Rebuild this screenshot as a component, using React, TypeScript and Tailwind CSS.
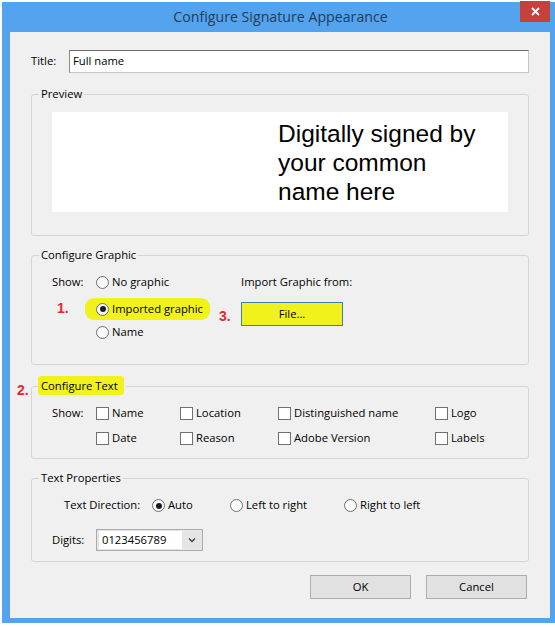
import * as React from "react";

const ui = "font-['Open_Sans','Noto_Sans',sans-serif] text-[11.25px] text-black";
const mark = "font-['Liberation_Sans',Arial,sans-serif] text-[14px] font-bold text-[#e8262d] leading-[16px]";
const hl = "bg-[#f1f11c]";

function Radio({ checked = false }: { checked?: boolean }) {
  return (
    <span className="flex h-[13px] w-[13px] shrink-0 items-center justify-center rounded-full border border-[#707070] bg-[#fbfbfb]">
      {checked && <span className="h-[6px] w-[6px] rounded-full bg-[#1b1b1b]" />}
    </span>
  );
}

function RadioItem({ label, checked, className = "" }: { label: string; checked?: boolean; className?: string }) {
  return (
    <div className={`flex items-center ${className}`}>
      <Radio checked={checked} />
      <span className="ml-[3px] whitespace-nowrap">{label}</span>
    </div>
  );
}

function Check({ label }: { label: string }) {
  return (
    <div className="flex items-center">
      <span className="h-[13px] w-[13px] shrink-0 border border-[#707070] bg-white" />
      <span className="ml-[3px] whitespace-nowrap">{label}</span>
    </div>
  );
}

// group box: the legend sits on the top border, so keep horizontal padding on the inner body
function Group({
  legend,
  children,
  className = "",
  bodyClass = "",
}: {
  legend: React.ReactNode;
  children: React.ReactNode;
  className?: string;
  bodyClass?: string;
}) {
  return (
    <fieldset className={`min-w-0 rounded-[3px] border border-[#d5d5d5] ${className}`}>
      <legend className="ml-[7px] px-[2px] leading-[16px]">{legend}</legend>
      <div className={bodyClass}>{children}</div>
    </fieldset>
  );
}

function WinButton({ children }: { children: React.ReactNode }) {
  return (
    <button className="flex h-[24px] w-[101px] items-center justify-center border border-[#adadad] bg-[#e1e1e1]">
      {children}
    </button>
  );
}

export default function App() {
  return (
    <div className={`h-[627px] w-[555px] overflow-hidden bg-white pl-[2px] pt-[2px] ${ui}`}>
      <div className="flex h-[621px] w-[557px] flex-col bg-[#53a3ef]">
        {/* title bar */}
        <div className="flex h-[30px] shrink-0 items-start">
          <div className="w-[39px]" />
          <div className="flex h-[30px] flex-1 items-center justify-center text-[14.2px] text-[#233b57]">
            Configure Signature Appearance
          </div>
          <div className="-mt-[1px] mr-[9px] flex h-[21px] w-[30px] items-center justify-center bg-[#c7413c]">
            <svg width="9" height="9" viewBox="0 0 9 9">
              <path d="M1 1L8 8M8 1L1 8" stroke="white" strokeWidth="1.8" />
            </svg>
          </div>
        </div>

        {/* client */}
        <div className="ml-[8px] flex h-[586px] w-[540px] flex-col bg-[#f0f0f0] pl-[21px] pr-[21px]">
          {/* title */}
          <div className="mt-[18px] flex h-[23px] items-center">
            <span className="w-[38px]">Title:</span>
            <div className="flex h-full flex-1 items-center border border-[#c5c5c5] border-l-[#8a8a8a] border-t-[#6f6f6f] bg-white pl-[3px]">
              Full name
            </div>
          </div>

          {/* preview */}
          <Group legend="Preview" className="mt-[13px] pb-[23px] pt-[10px]" bodyClass="px-[20px]">
            <div className="h-[100px] bg-white pl-[226px] pt-[7px] font-['Liberation_Sans',Arial,sans-serif] text-[24.5px] leading-[29px]">
              <div>Digitally signed by</div>
              <div>your common</div>
              <div>name here</div>
            </div>
          </Group>

          {/* configure graphic */}
          <Group legend="Configure Graphic" className="mt-[11px] pb-[19px] pt-[7px]" bodyClass="flex pl-[20px]">
            <div className="flex w-[167px] flex-col">
              <div className="flex h-[25px] items-center">
                <span className="w-[44px]">Show:</span>
                <RadioItem label="No graphic" />
              </div>
              <div className="flex h-[25px] items-center">
                <span className={`w-[44px] pl-[5px] ${mark}`}>1.</span>
                <div className={`-ml-[11px] mt-[3px] flex h-[22px] items-center rounded-[9px] pl-[11px] pr-[7px] ${hl}`}>
                  <Radio checked />
                  <span className="ml-[3px] whitespace-nowrap">Imported graphic</span>
                </div>
              </div>
              <div className="flex h-[25px] items-center">
                <span className="w-[44px]" />
                <RadioItem label="Name" />
              </div>
            </div>
            <div className="flex flex-col">
              <div className="flex h-[25px] items-center pl-[22px]">Import Graphic from:</div>
              <div className="mt-[7px] flex items-center">
                <span className={`w-[22px] pt-[3px] ${mark}`}>3.</span>
                <button className={`flex h-[24px] w-[102px] items-center justify-center border border-[#3c7fb1] ${hl}`}>
                  File...
                </button>
              </div>
            </div>
          </Group>

          {/* configure text */}
          <div className="-ml-[14px] mt-[13px] flex">
            <span className={`mt-[4px] w-[14px] ${mark}`}>2.</span>
            <Group
              className="flex-1 pb-[7px] pt-[7px]"
              bodyClass="grid auto-rows-[25px] grid-cols-[44px_84px_98px_157px_1fr] items-center pl-[20px]"
              legend={<span className={`-ml-[3px] rounded-[3px] py-[2px] pl-[3px] pr-[6px] ${hl}`}>Configure Text</span>}
            >
              <span>Show:</span>
              <Check label="Name" />
              <Check label="Location" />
              <Check label="Distinguished name" />
              <Check label="Logo" />
              <span />
              <Check label="Date" />
              <Check label="Reason" />
              <Check label="Adobe Version" />
              <Check label="Labels" />
            </Group>
          </div>

          {/* text properties */}
          <Group legend="Text Properties" className="mt-[11px] pb-[10px] pt-[7px]">
            <div className="flex h-[25px] items-center pl-[32px]">
              <span className="w-[88px]">Text Direction:</span>
              <RadioItem label="Auto" checked className="w-[78px]" />
              <RadioItem label="Left to right" className="w-[114px]" />
              <RadioItem label="Right to left" />
            </div>
            <div className="mt-[11px] flex h-[22px] items-center pl-[20px]">
              <span className="w-[44px]">Digits:</span>
              <div className="flex h-full w-[107px] border border-[#acacac] bg-[#e5e5e5] py-[1px] pl-[2px]">
                <div className="flex w-[83px] items-center bg-white pl-[3px]">0123456789</div>
                <div className="flex flex-1 items-center justify-center">
                  <svg width="8" height="6" viewBox="0 0 8 6">
                    <path d="M1 1.5L4 4.5L7 1.5" fill="none" stroke="#404040" strokeWidth="1.4" />
                  </svg>
                </div>
              </div>
            </div>
          </Group>

          {/* buttons */}
          <div className="mt-[13px] flex justify-end gap-[15px] pr-[2px]">
            <WinButton>OK</WinButton>
            <WinButton>Cancel</WinButton>
          </div>
        </div>
      </div>
    </div>
  );
}
